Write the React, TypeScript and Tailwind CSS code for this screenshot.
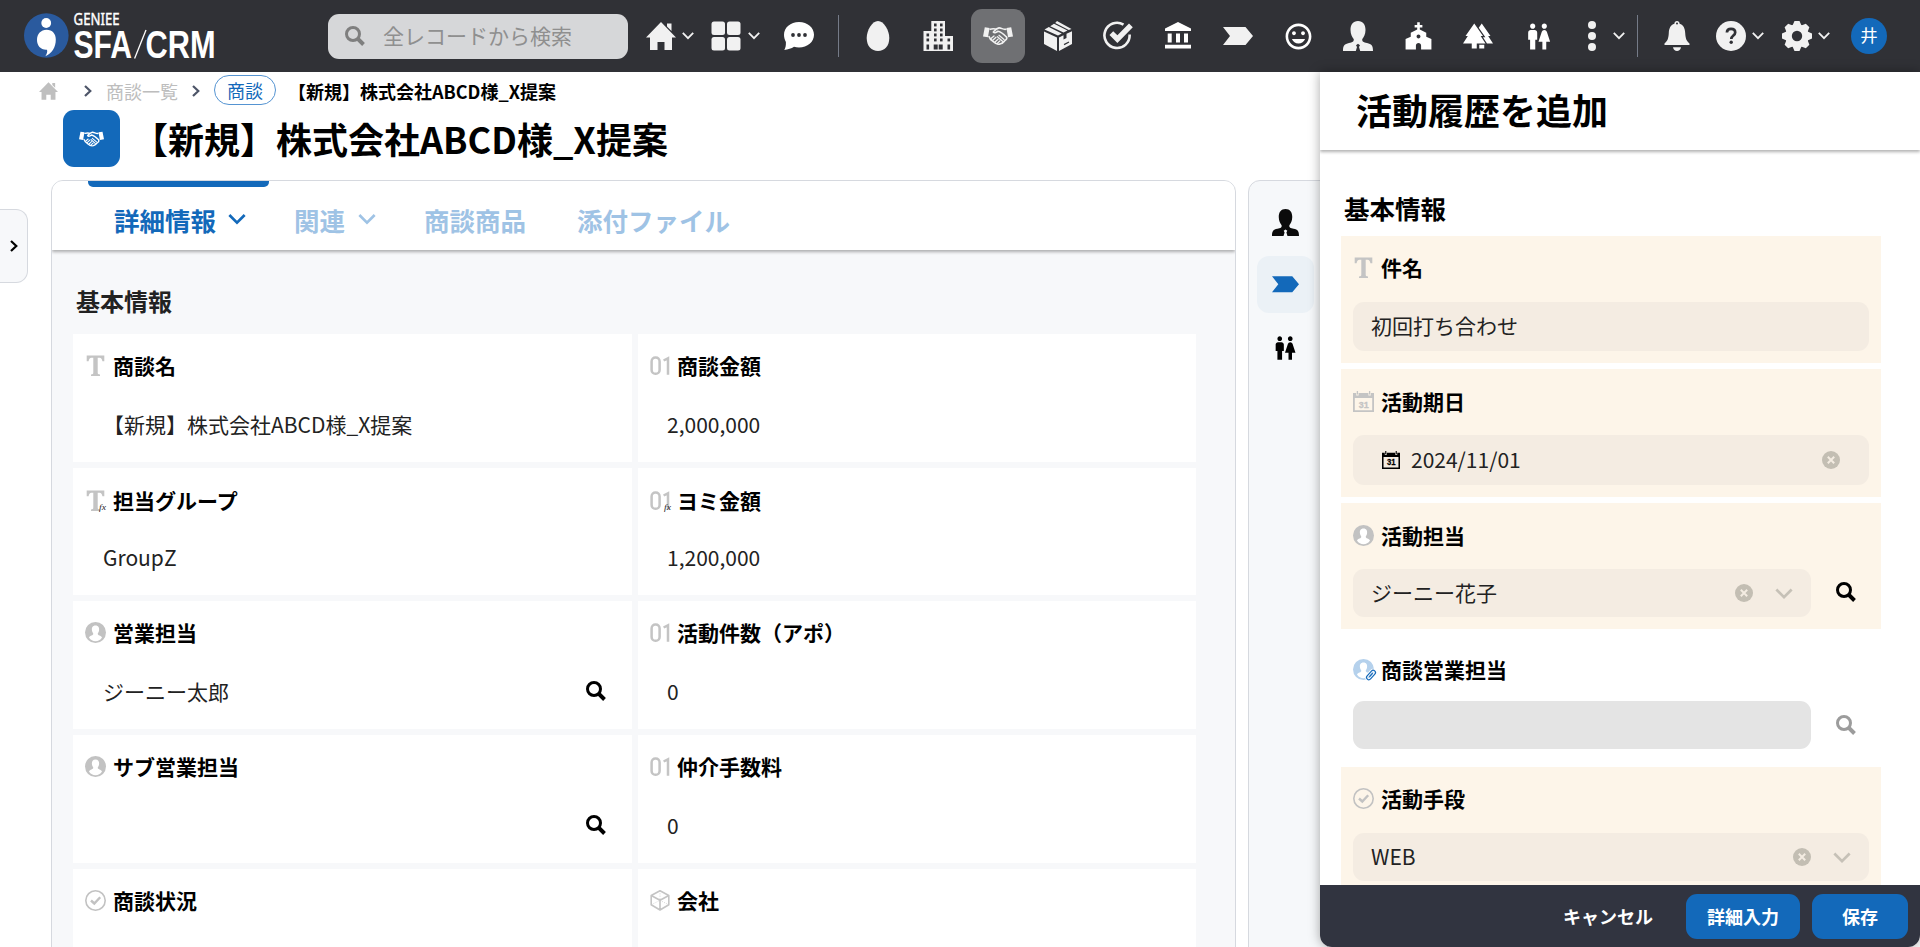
import React from "react";
import { MdChurch, MdForest, MdWc, MdInsertEmoticon } from "react-icons/md";

type IconProps = { className?: string };

const Chevron = ({ className = "" }: IconProps) => (
  <svg viewBox="0 0 20 12" className={className} fill="none" stroke="currentColor" strokeWidth="3">
    <path d="M1.5 1.5 L10 10 L18.5 1.5" />
  </svg>
);

const ChevronRight = ({ className = "" }: IconProps) => (
  <svg viewBox="0 0 8 12" className={className} fill="none" stroke="currentColor" strokeWidth="2.2">
    <path d="M1 1 L6.3 6 L1 11" />
  </svg>
);

const NavChevron = () => (
  <svg viewBox="0 0 12 8" className="h-2 w-3 shrink-0" fill="none" stroke="#f1f1f1" strokeWidth="1.8">
    <path d="M0.8 0.8 L6 6.2 L11.2 0.8" />
  </svg>
);

const Search = ({ className = "" }: IconProps) => (
  <svg viewBox="0 0 20 20" className={className} fill="none" stroke="currentColor">
    <circle cx="8" cy="8" r="6.5" strokeWidth="3" />
    <path d="M12.5 12.5 L18.5 18.5" strokeWidth="3.9" />
  </svg>
);

const Home = ({ className = "" }: IconProps) => (
  <svg viewBox="0 0 30 28" className={className} fill="currentColor">
    <path d="M15 0 L30 15.5 H26 V28 H18.5 V20 H11.5 V28 H4 V15.5 H0 Z M21 1.5 H25.5 V9 L21 4.4 Z" />
  </svg>
);

const Grid = () => (
  <svg viewBox="0 0 30 30" className="size-[30px] shrink-0" fill="#f1f1f1">
    <rect x="0.5" y="0.5" width="13.5" height="13.5" rx="2.5" />
    <rect x="16" y="0.5" width="13.5" height="13.5" rx="2.5" />
    <rect x="0.5" y="16" width="13.5" height="13.5" rx="2.5" />
    <rect x="16" y="16" width="13.5" height="13.5" rx="2.5" />
  </svg>
);

const Chat = () => (
  <svg viewBox="0 0 30 28" className="h-7 w-[30px] shrink-0">
    <path
      d="M15 0 C23.5 0 30 5.5 30 12.8 C30 20 23.5 25.5 15 25.5 C13.2 25.5 11.5 25.3 10 24.8 C7.5 26.5 4 27.6 0.3 28 C1.6 25.8 2 23.5 1.9 20 C0.7 17.9 0 15.5 0 12.8 C0 5.5 6.5 0 15 0 Z"
      fill="#fff"
    />
    <circle cx="9" cy="13" r="1.9" fill="#303136" />
    <circle cx="15" cy="13" r="1.9" fill="#303136" />
    <circle cx="21" cy="13" r="1.9" fill="#303136" />
  </svg>
);

const Egg = () => (
  <svg viewBox="0 0 30 30" className="size-[30px]" fill="#f1f1f1">
    <path d="M15 0 C21 0 26.3 9.5 26.3 17 C26.3 25 21.5 30 15 30 C8.5 30 3.7 25 3.7 17 C3.7 9.5 9 0 15 0 Z" />
  </svg>
);

const windows: [number, number][] = [
  [11, 2.5], [17, 2.5], [11, 7.5], [17, 7.5], [3.5, 12.5], [11, 12.5], [17, 12.5],
  [3.5, 17.5], [11, 17.5], [17, 17.5], [24.5, 17.5],
];

const Building = () => (
  <svg viewBox="0 0 30 30" className="size-[30px]">
    <path d="M8.3 0 H22 V15 H30 V30 H0.5 V10 H8.3 Z" fill="#f1f1f1" />
    {windows.map(([x, y]) => (
      <rect key={`${x}-${y}`} x={x} y={y} width="2.6" height="2.9" fill="#303136" />
    ))}
    <path d="M3.5 23.5 h2.6 v5 h-2.6 Z M10.7 23.5 h4 v5 h-4 Z M15.7 23.5 h4 v5 h-4 Z M24.5 23.5 h2.6 v5 h-2.6 Z" fill="#303136" />
  </svg>
);

const Handshake = ({ className = "" }: IconProps) => (
  <svg viewBox="0 0 30 18" className={className} fill="none" stroke="currentColor" strokeLinejoin="round" strokeLinecap="round">
    <path d="M1.8 0.2 L6.6 0.9 L4.9 10.3 L0 9.4 Z M28.2 0.2 L23.4 0.9 L25.1 10.3 L30 9.4 Z" fill="currentColor" stroke="none" />
    <path d="M7.2 2.3 C9 1.6 10.5 1.7 12.5 2 M22.8 2.3 C20 2.8 18.5 0.8 16 0.9 C13.5 1.3 11.8 3.5 10.3 5 C11.5 6.5 13.8 5.3 15 4.2 C17.5 4.5 20.5 7 23.5 10" strokeWidth="1.6" />
    <path d="M6 9.5 C6.5 11.5 8 13 10 14.3 C12.5 16.5 15.5 18 17.5 16.8 C19.5 16.5 20.5 15 22 13.5 C23.5 12.7 24 11 23.5 10" strokeWidth="1.6" />
    <path d="M8 11.5 L11 9 M9.8 13.3 L13 10.3 M12 15 L15 12.2 M14.2 16.4 L16.8 14 M16 8.3 L21 12.5 M14.5 9.8 L19.5 14.3" strokeWidth="1.3" />
  </svg>
);

const Box = () => (
  <svg viewBox="0 0 30 30" className="size-[30px]">
    <path d="M1 10.5 L14 16.5 V30 L1 23 Z" fill="#f1f1f1" />
    <path d="M16 16.5 L20.5 14.3 V18.5 L23.5 17 V12.8 L29 10.3 V23 L16 30 Z" fill="#f1f1f1" />
    <path d="M1.5 8.6 L5.8 6 L18.8 12.4 L15 14.5 Z M7.2 5.2 L11 2.8 L24.5 9.6 L20.5 11.6 Z M12.2 2 L14 0 L28.5 8 L25.8 9 Z" fill="#f1f1f1" />
    <path d="M21 23.6 L26 21" stroke="#303136" strokeWidth="1.2" />
  </svg>
);

const CheckCircle = () => (
  <svg viewBox="0 0 30 30" className="size-[30px]">
    <path d="M20.5 3.6 A12.6 12.6 0 1 0 26.6 13.5" fill="none" stroke="#f1f1f1" strokeWidth="2.6" />
    <path d="M6.5 14 L10.2 10.3 L14.4 14.3 L26 2.6 L29.8 6.2 L14.4 22 Z" fill="#f1f1f1" />
  </svg>
);

const Bank = () => (
  <svg viewBox="0 0 30 30" className="size-[30px]" fill="#fff">
    <path d="M15 1 L28 7.5 V10 H2 V7.5 Z M4.7 12.5 h4 v9 h-4 Z M13 12.5 h4 v9 h-4 Z M21 12.5 h4 v9 h-4 Z M2 23.7 h26 v3.8 h-26 Z" />
  </svg>
);

const Arrow = ({ className = "" }: IconProps) => (
  <svg viewBox="0 0 30 18" className={className} fill="currentColor">
    <path d="M0 0 H22.5 L30 9 L22.5 18 H0 L7 9 Z" />
  </svg>
);

const Person = ({ className = "" }: IconProps) => (
  <svg viewBox="0 0 30 30" className={className} fill="currentColor">
    <path d="M15 0 C20 0 22.5 3.5 22.5 9 C22.5 13.5 20.7 16 19.3 18 C18.8 20.5 20.5 21.3 24 22 C28.5 23 30 24.5 30 30 H17.2 L16 26 L17 24.3 L15 22.8 L13 24.3 L14 26 L12.8 30 H0 C0 24.5 1.5 23 6 22 C9.5 21.3 11.2 20.5 10.7 18 C9.3 16 7.5 13.5 7.5 9 C7.5 3.5 10 0 15 0 Z" />
  </svg>
);

const Dots = () => (
  <svg viewBox="0 0 8 30" className="h-[30px] w-2 shrink-0" fill="#f1f1f1">
    <circle cx="4" cy="4" r="4" />
    <circle cx="4" cy="15" r="4" />
    <circle cx="4" cy="26" r="4" />
  </svg>
);

const Bell = () => (
  <svg viewBox="0 0 26 30" className="h-[30px] w-[26px] shrink-0" fill="#f1f1f1">
    <path d="M13 0 C14.5 0 15.5 1 15.6 2.8 C19.5 4 21 7.5 21.2 12 C21.5 17.5 22.5 20 25.5 22.5 V24 H0.5 V22.5 C3.5 20 4.5 17.5 4.8 12 C5 7.5 6.5 4 10.4 2.8 C10.5 1 11.5 0 13 0 Z" />
    <path d="M9 26.2 H17 C16.5 28.8 15 30 13 30 C11 30 9.5 28.8 9 26.2 Z" />
    <circle cx="13" cy="2.6" r="1" fill="#303136" />
  </svg>
);

const Help = () => (
  <svg viewBox="0 0 30 30" className="size-[30px] shrink-0">
    <circle cx="15" cy="15" r="15" fill="#f1f1f1" />
    <path d="M10.9 11.5 C11 8.7 12.8 7.9 15 7.9 C17.5 7.9 19.2 9.2 19.2 11.5 C19.2 14.5 15.3 14.5 15.3 18" fill="none" stroke="#303136" strokeWidth="2.7" />
    <circle cx="15.2" cy="21.3" r="1.7" fill="#303136" />
  </svg>
);

const Gear = () => (
  <svg viewBox="-15 -15 30 30" className="size-[30px] shrink-0">
    <circle r="11.8" fill="#f1f1f1" />
    {[0, 45, 90, 135, 180, 225, 270, 315].map((a) => (
      <path key={a} d="M-4.5 -10.5 L-2.5 -15 H2.5 L4.5 -10.5 Z" fill="#f1f1f1" transform={`rotate(${a})`} />
    ))}
    <circle r="5.2" fill="#303136" />
  </svg>
);

const Logo = () => (
  <svg viewBox="0 0 192 46" className="h-[46px] w-[192px] shrink-0 overflow-visible">
    <circle cx="22.3" cy="22.5" r="22.3" fill="#2a5a9e" />
    <circle cx="22.2" cy="10" r="4.9" fill="#fff" />
    <path d="M22.5 16.8 C28.5 16.8 31.8 21 31.8 26.5 C31.8 34.5 28 40 21.3 43.3 C23 40.5 23.6 38.5 23 36.7 C17 37.2 13 32.8 13 27 C13 21 17 16.8 22.5 16.8 Z" fill="#fff" />
    <text x="49.6" y="11.6" fontSize="15.5" fill="#fff" stroke="#fff" strokeWidth="0.4" textLength="46" lengthAdjust="spacingAndGlyphs" fontFamily="Noto Sans, sans-serif">GENIEE</text>
    <text x="49.5" y="45" fontSize="39.5" fontWeight="700" fill="#fff" textLength="58.5" lengthAdjust="spacingAndGlyphs" fontFamily="Liberation Sans, sans-serif">SFA</text>
    <path d="M110.6 45.5 L122 17" stroke="#fff" strokeWidth="1.3" />
    <text x="121.5" y="45" fontSize="39.5" fontWeight="700" fill="#fff" textLength="70" lengthAdjust="spacingAndGlyphs" fontFamily="Liberation Sans, sans-serif">CRM</text>
  </svg>
);

type FieldIconName = "text" | "textFx" | "num" | "numFx" | "user" | "userLink" | "check" | "cube" | "cal";

const Fx = () => (
  <text x="14" y="19.5" fontSize="9" fontStyle="italic" fill="#222" fontFamily="Liberation Serif, serif" textLength="7" lengthAdjust="spacingAndGlyphs">fx</text>
);

const TextGlyph = () => (
  <path d="M1.7 0.5 H19.3 V6.2 H17.4 C17 3.8 16.3 3 14.5 2.8 H12.7 V17.5 C12.7 19 13.2 19.3 15 19.4 V21 H6 V19.4 C7.800 19.3 8.3 19 8.3 17.5 V2.8 H6.5 C4.7 3 4 3.8 3.6 6.2 H1.7 Z" fill="#c4c4c4" />
);

const NumGlyph = () => (
  <g fill="none" stroke="#c4c4c4" strokeWidth="2.5">
    <rect x="1.6" y="2.6" width="8" height="16.2" rx="3.8" />
    <path d="M13.6 5.5 L18 3.3 V19.8" />
  </g>
);

const UserGlyph = ({ color }: { color: string }) => (
  <>
    <circle cx="10.5" cy="10.5" r="10.5" fill={color} />
    <path d="M10.5 3.5 C13.5 3.5 14.3 5.8 14.1 8 C14 9.8 13 10.8 12.7 11.8 C12.6 13.5 16 13.5 17 15.5 C15.5 18 13 19.3 10.5 19.3 C8 19.3 5.5 18 4 15.5 C5 13.5 8.4 13.5 8.3 11.8 C8 10.8 7 9.8 6.9 8 C6.7 5.8 7.5 3.5 10.5 3.5 Z" fill="#fff" />
  </>
);

const Calendar = ({ className = "" }: IconProps) => (
  <svg viewBox="0 0 21 21" className={className} fill="none" stroke="currentColor">
    <path d="M0.9 3.5 V20.1 H20.1 V3.5" strokeWidth="1.8" />
    <path d="M0 2 H3.2 V4.5 H5.6 V2 H15.4 V4.5 H17.8 V2 H21 V7 H0 Z" fill="currentColor" stroke="none" />
    <path d="M4.4 0 V3.5 M16.6 0 V3.5" strokeWidth="1.3" />
    <text x="5.7" y="16.8" fontSize="9.5" fontWeight="700" fill="currentColor" stroke="currentColor" strokeWidth="0.3" fontFamily="Liberation Sans, sans-serif" textLength="10" lengthAdjust="spacingAndGlyphs">31</text>
  </svg>
);

const FieldIcon = ({ name }: { name: FieldIconName }) => {
  if (name === "cal") return <Calendar className="size-[21px] shrink-0 text-[#c4c4c4]" />;
  return (
    <svg viewBox="0 0 21 21" className="size-[21px] shrink-0 overflow-visible">
      {(name === "text" || name === "textFx") && <TextGlyph />}
      {(name === "num" || name === "numFx") && <NumGlyph />}
      {(name === "textFx" || name === "numFx") && <Fx />}
      {name === "user" && <UserGlyph color="#c2c2c2" />}
      {name === "userLink" && (
        <>
          <UserGlyph color="#b5d1ec" />
          <g transform="rotate(-48 18 16)" fill="none">
            <rect x="12.5" y="13.5" width="11" height="5" rx="2.5" stroke="#fff" strokeWidth="2.6" />
            <rect x="12.5" y="13.7" width="11" height="4.6" rx="2.3" stroke="#1369ba" strokeWidth="1.2" />
            <path d="M15.5 16 H20.5" stroke="#1369ba" strokeWidth="1.1" />
          </g>
        </>
      )}
      {name === "check" && (
        <g fill="none" stroke="#c2c2c2">
          <circle cx="10.5" cy="10.5" r="9.7" strokeWidth="1.6" />
          <path d="M6 10.5 L9.3 13.5 L15.2 7.2" strokeWidth="2.4" />
        </g>
      )}
      {name === "cube" && (
        <g fill="none" stroke="#c4c4c4" strokeWidth="1.6" strokeLinejoin="round">
          <path d="M10 0.8 L18.8 5.5 V14.8 L10 20 L1.2 14.8 V5.5 Z M1.2 5.5 L10 10.3 L18.8 5.5 M10 10.3 V20" />
          <path d="M10 0.8 V10.3 M1.2 14.8 L10 10.3 L18.8 14.8" strokeWidth="0.6" strokeDasharray="1.2 1.2" />
        </g>
      )}
    </svg>
  );
};

const Clear = () => (
  <svg viewBox="0 0 18 18" className="size-[18px] shrink-0">
    <circle cx="9" cy="9" r="9" fill="#c3beb3" />
    <path d="M5.8 5.8 L12.2 12.2 M12.2 5.8 L5.8 12.2" stroke="#f4ece2" strokeWidth="2" />
  </svg>
);

const modules: { key: string; node: React.ReactNode; active?: boolean }[] = [
  { key: "egg", node: <Egg /> },
  { key: "building", node: <Building /> },
  { key: "deal", node: <Handshake className="h-[18px] w-[30px] text-[#f1f1f1]" />, active: true },
  { key: "box", node: <Box /> },
  { key: "check", node: <CheckCircle /> },
  { key: "bank", node: <Bank /> },
  { key: "arrow", node: <Arrow className="h-[18px] w-[30px] text-[#f1f1f1]" /> },
  { key: "smile", node: <MdInsertEmoticon className="size-[31px] text-white" /> },
  { key: "person", node: <Person className="size-[30px] text-[#f1f1f1]" /> },
  { key: "church", node: <MdChurch className="size-[31px] text-white" /> },
  { key: "forest", node: <MdForest className="size-[30px] text-white" /> },
  { key: "wc", node: <MdWc className="size-[31px] text-white" /> },
];

const Header = () => (
  <header className="flex h-[72px] shrink-0 items-center bg-[#303136]">
    <div className="ml-6 w-[304px] shrink-0">
      <Logo />
    </div>
    <div className="flex h-[45px] w-[300px] shrink-0 items-center rounded-[11px] bg-[#d6d7d9] pl-[17px]">
      <Search className="size-5 text-[#7f7f7f]" />
      <span className="ml-[18px] pb-0.5 text-[21px] leading-none text-[#8f8f8f]">全レコードから検索</span>
    </div>
    <div className="ml-[18px] flex w-12 shrink-0 items-center justify-between">
      <Home className="h-7 w-[30px] text-[#f1f1f1]" />
      <NavChevron />
    </div>
    <div className="ml-[17px] flex w-[49px] shrink-0 items-center justify-between">
      <Grid />
      <NavChevron />
    </div>
    <div className="ml-6 shrink-0">
      <Chat />
    </div>
    <div className="ml-6 h-[42px] w-px shrink-0 bg-[#757b88]" />
    <nav className="ml-[9px] flex shrink-0">
      {modules.map((m) => (
        <div key={m.key} className="flex h-[54px] w-[60px] items-center justify-center">
          {m.active ? (
            <div className="flex h-[54px] w-[54px] items-center justify-center rounded-[11px] bg-[#6f7073]">{m.node}</div>
          ) : (
            m.node
          )}
        </div>
      ))}
    </nav>
    <div className="ml-5 flex w-[37px] shrink-0 items-center justify-between">
      <Dots />
      <NavChevron />
    </div>
    <div className="ml-3 h-[42px] w-px shrink-0 bg-[#757b88]" />
    <div className="ml-[26px] shrink-0">
      <Bell />
    </div>
    <div className="ml-[26px] flex w-12 shrink-0 items-center justify-between">
      <Help />
      <NavChevron />
    </div>
    <div className="ml-[18px] flex w-12 shrink-0 items-center justify-between">
      <Gear />
      <NavChevron />
    </div>
    <div className="ml-[21px] flex size-9 shrink-0 items-center justify-center rounded-full bg-[#1369ba] pb-0.5 text-[17.5px] leading-none text-white">
      井
    </div>
  </header>
);

type Field = { icon: FieldIconName; label: string; value: string; search?: boolean };

const fields: Field[] = [
  { icon: "text", label: "商談名", value: "【新規】株式会社ABCD様_X提案" },
  { icon: "num", label: "商談金額", value: "2,000,000" },
  { icon: "textFx", label: "担当グループ", value: "GroupZ" },
  { icon: "numFx", label: "ヨミ金額", value: "1,200,000" },
  { icon: "user", label: "営業担当", value: "ジーニー太郎", search: true },
  { icon: "num", label: "活動件数（アポ）", value: "0" },
  { icon: "user", label: "サブ営業担当", value: "", search: true },
  { icon: "num", label: "仲介手数料", value: "0" },
  { icon: "check", label: "商談状況", value: "" },
  { icon: "cube", label: "会社", value: "" },
];

const DetailField = ({ icon, label, value, search, right, calculated }: Field & { right: boolean; calculated: boolean }) => (
  <div className={`bg-white ${calculated ? "pt-[18px]" : "pt-[17px]"}`}>
    <div className="flex h-7 items-center pl-3">
      <FieldIcon name={icon} />
      <span className={`${right ? "ml-1.5" : "ml-[7px]"} text-[21px] font-bold leading-7 text-black`}>{label}</span>
    </div>
    <div className={`${calculated ? "mt-[29px]" : "mt-[31px]"} flex h-7 items-center justify-between pr-[26px] ${right ? "pl-[29px]" : "pl-[30px]"}`}>
      <span className="text-[21px] leading-7 text-[#222]">{value}</span>
      {search && <Search className="size-5 text-black" />}
    </div>
  </div>
);

const MainCard = () => (
  <section className="flex h-[780px] w-[1185px] shrink-0 flex-col overflow-hidden rounded-t-xl border border-[#d6d9df] bg-[#f7f8fa]">
    <div className="z-10 flex h-[69px] shrink-0 bg-white text-[25.5px] font-bold text-[#9fc3e5] shadow-[0_2px_3px_rgba(0,0,0,0.3)]">
      <div className="ml-9 w-[181px] text-[#1369ba]">
        <div className="h-1.5 rounded-b-[5px] bg-[#1369ba]" />
        <div className="flex h-[66px] items-center pl-[26px]">
          詳細情報
          <Chevron className="ml-[12px] mt-[-3px] h-3 w-[18px]" />
        </div>
      </div>
      <div className="ml-[25px] mt-1.5 flex h-[66px] items-center">
        関連
        <Chevron className="ml-[13px] mt-[-3px] h-3 w-[18px]" />
      </div>
      <div className="ml-[48px] mt-1.5 flex h-[66px] items-center">商談商品</div>
      <div className="ml-[51px] mt-1.5 flex h-[66px] items-center">添付ファイル</div>
    </div>
    <h2 className="ml-6 mt-[33px] h-9 text-2xl font-bold leading-9 text-[#222]">基本情報</h2>
    <div className="ml-[21px] mt-[15px] grid w-[1123px] grid-cols-[559px_558px] grid-rows-[128px_127px_128px_128px_128px] gap-1.5">
      {fields.map((f, i) => (
        <DetailField key={f.label} {...f} right={i % 2 === 1} calculated={f.icon === "textFx" || f.icon === "numFx"} />
      ))}
    </div>
  </section>
);

const Rail = () => (
  <aside className="flex h-[780px] w-20 flex-col items-center rounded-tl-xl border border-[#d6d9df] bg-[#f6f8fa] pr-1.5 pt-[13px]">
    <div className="flex size-14 items-center justify-center">
      <Person className="size-[27px] text-[#0b0b0b]" />
    </div>
    <div className="mt-1.5 flex size-[57px] items-center justify-center rounded-xl bg-[#ebf1f6]">
      <Arrow className="h-[16.5px] w-[27px] text-[#1369ba]" />
    </div>
    <div className="mt-[7px] flex size-14 items-center justify-center">
      <MdWc className="size-[28px] text-black" />
    </div>
  </aside>
);

type PanelField = {
  icon: FieldIconName;
  label: string;
  value: string;
  box: string;
  input: string;
  kind: "text" | "date" | "lookup" | "disabled" | "select";
};

const panelFields: PanelField[] = [
  { icon: "text", label: "件名", value: "初回打ち合わせ", kind: "text", box: "h-[127px] bg-[#fdf5e9] pt-[17px]", input: "mt-[21px] h-[49px] pl-[18px]" },
  { icon: "cal", label: "活動期日", value: "2024/11/01", kind: "date", box: "mt-1.5 h-32 bg-[#fdf5e9] pt-[18px]", input: "mt-5 h-[50px] pl-[29px]" },
  { icon: "user", label: "活動担当", value: "ジーニー花子", kind: "lookup", box: "mt-1.5 h-[126px] bg-[#fdf5e9] pt-[18px]", input: "mt-5 h-12 pl-[18px]" },
  { icon: "userLink", label: "商談営業担当", value: "", kind: "disabled", box: "mt-1.5 h-[126px] pt-5", input: "mt-[18px] h-12" },
  { icon: "check", label: "活動手段", value: "WEB", kind: "select", box: "mt-1.5 h-[130px] bg-[#fdf5e9] pt-[17px]", input: "mt-[21px] h-12 pl-[18px]" },
];

const PanelItem = ({ icon, label, value, box, input, kind }: PanelField) => {
  const narrow = kind === "lookup" || kind === "disabled";
  return (
    <div className={`${box} shrink-0 pl-3`}>
      <div className="flex h-7 items-center">
        <FieldIcon name={icon} />
        <span className="ml-[7px] text-[21px] font-bold leading-7">{label}</span>
      </div>
      <div className="flex items-center">
        <div
          className={`${input} flex shrink-0 items-center rounded-[11px] text-[21px] leading-none text-[#222] ${narrow ? "w-[458px]" : "w-[516px]"} ${
            kind === "disabled" ? "bg-[#e4e4e4]" : "bg-[#f4ece2]"
          }`}
        >
          {kind === "date" && <Calendar className="mr-[11px] size-[18px] text-black" />}
          <span className="grow pb-0.5">{value}</span>
          {kind === "date" && <div className="mr-[29px]"><Clear /></div>}
          {(kind === "lookup" || kind === "select") && (
            <>
              <Clear />
              <Chevron className="ml-[22px] mr-[18px] h-[11px] w-[18px] text-[#c6c1b7]" />
            </>
          )}
        </div>
        {narrow && (
          <Search className={`ml-[25px] mt-[17px] size-5 ${kind === "disabled" ? "text-[#9c9c9c]" : "text-black"}`} />
        )}
      </div>
    </div>
  );
};

const Panel = () => (
  <div className="z-20 flex h-[875px] w-[600px] shrink-0 flex-col overflow-hidden rounded-b-xl bg-white shadow-[0_0_12px_rgba(0,0,0,0.35)]">
    <div className="z-10 flex h-[78px] shrink-0 items-center bg-white pb-1 pl-9 shadow-[0_2px_3px_rgba(0,0,0,0.3)]">
      <h2 className="text-4xl font-bold leading-none text-black">活動履歴を追加</h2>
    </div>
    <div className="flex min-h-0 grow flex-col overflow-hidden pl-[21px] text-black">
      <h3 className="ml-[3px] mt-10 h-9 shrink-0 text-[25.5px] font-bold leading-9">基本情報</h3>
      <div className="mt-2.5 flex w-[540px] flex-col">
        {panelFields.map((f) => (
          <PanelItem key={f.label} {...f} />
        ))}
      </div>
    </div>
    <div className="flex h-[62px] shrink-0 items-center justify-end bg-[#313440] pr-3 text-[18px] font-bold leading-none text-white">
      <span className="mr-[33px]">キャンセル</span>
      <button className="h-[45px] w-[114px] rounded-[11px] bg-[#1369ba]">詳細入力</button>
      <button className="ml-3 h-[45px] w-24 rounded-[11px] bg-[#1369ba]">保存</button>
    </div>
  </div>
);

export default function App() {
  return (
    <div className="flex h-[947px] w-[1920px] flex-col overflow-hidden bg-white font-['Noto_Sans_CJK_JP',sans-serif]">
      <Header />
      <div className="flex min-h-0 grow">
        <div className="flex w-[51px] shrink-0 flex-col pt-[137px]">
          <button className="flex h-[74px] w-7 items-center justify-center rounded-r-xl border border-l-0 border-[#d6d9df] bg-[#f7f8fa]">
            <ChevronRight className="h-3 w-2 text-black" />
          </button>
        </div>
        <div className="flex w-[1269px] shrink-0 flex-col">
          <div className="flex h-[38px] shrink-0 items-center text-[18px] leading-none">
            <Home className="-ml-3 h-[18px] w-[19px] text-[#bfbfbf]" />
            <ChevronRight className="ml-[26px] h-3 w-2 text-[#4d5568]" />
            <span className="ml-[14px] pb-px text-[#bdbdbd]">商談一覧</span>
            <ChevronRight className="ml-[14px] h-3 w-2 text-[#4d5568]" />
            <span className="ml-[14px] flex h-[30px] w-[62px] -translate-y-px items-center justify-center rounded-full border border-[#5594d2] text-[#1369ba]">
              商談
            </span>
            <span className="ml-3 pb-px font-bold text-black">【新規】株式会社ABCD様_X提案</span>
          </div>
          <div className="flex h-[57px] shrink-0 items-center pl-3">
            <div className="flex size-[57px] items-center justify-center rounded-[11px] bg-[#1369ba]">
              <Handshake className="h-4 w-[25px] text-white" />
            </div>
            <h1 className="ml-3 text-4xl font-bold leading-[57px] text-black">【新規】株式会社ABCD様_X提案</h1>
          </div>
          <div className="mt-[13px] flex">
            <MainCard />
            <div className="ml-3 shrink-0">
              <Rail />
            </div>
          </div>
        </div>
        <Panel />
      </div>
    </div>
  );
}
